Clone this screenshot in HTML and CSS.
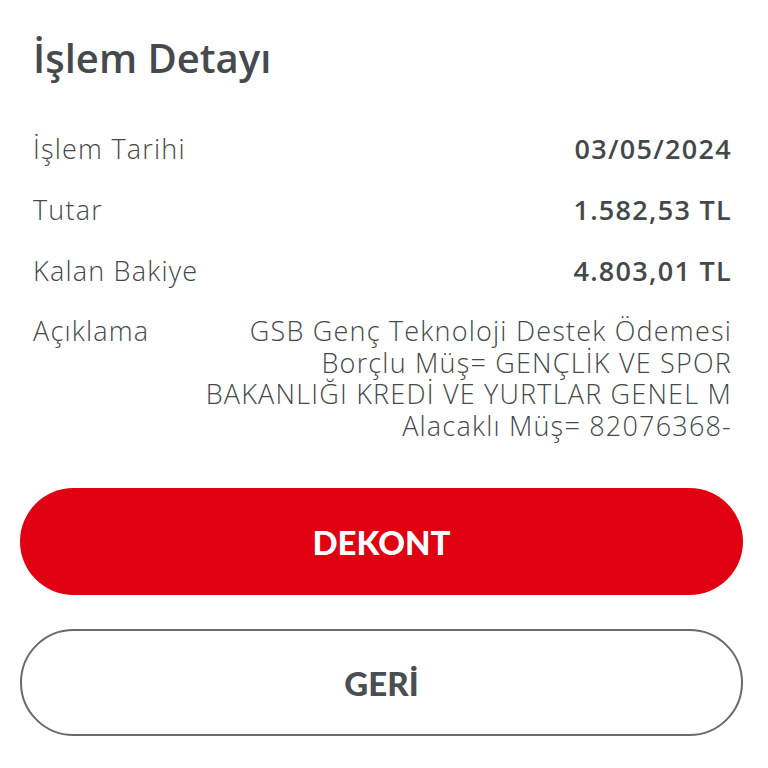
FILE: index.html
```html
<!DOCTYPE html>
<html lang="tr">
<head>
<meta charset="utf-8">
<link rel="stylesheet" href="styles.css">
</head>
<body>
<div class="page">
  <h1 class="title">İşlem Detayı</h1>
  <div class="rows">
    <div class="row"><span class="label">İşlem Tarihi</span><span class="value">03/05/2024</span></div>
    <div class="row"><span class="label">Tutar</span><span class="value">1.582,53 TL</span></div>
    <div class="row"><span class="label">Kalan Bakiye</span><span class="value">4.803,01 TL</span></div>
    <div class="row desc-row"><span class="label">Açıklama</span><span class="desc">GSB Genç Teknoloji Destek Ödemesi<br>Borçlu Müş= GENÇLİK VE SPOR<br>BAKANLIĞI KREDİ VE YURTLAR GENEL M<br>Alacaklı Müş= 82076368-</span></div>
  </div>
  <div class="buttons">
    <button class="btn btn-primary">DEKONT</button>
    <button class="btn btn-secondary">GERİ</button>
  </div>
</div>
</body>
</html>
```
FILE: styles.css
```css
html, body {
  margin: 0;
  padding: 0;
  background: #ffffff;
}
.page {
  width: 768px;
  height: 768px;
  box-sizing: border-box;
  padding: 28px 25px 0 20px;
  font-family: "Open Sans", sans-serif;
  color: #4a4d50;
}
.title {
  margin: 0 0 0 13px;
  font-family: "Open Sans", sans-serif;
  font-weight: 600;
  font-size: 40px;
  line-height: 60px;
  color: #464a4e;
}
.rows {
  margin: 30px 11px 0 13px;
  display: flex;
  flex-direction: column;
}
.row {
  display: flex;
  justify-content: space-between;
  align-items: flex-start;
  font-size: 27px;
  line-height: 61px;
}
.label {
  font-weight: 300;
  letter-spacing: 1.2px;
  color: #454849;
}
.value {
  font-weight: 600;
  letter-spacing: 1.3px;
  color: #45484b;
}
.desc-row {
  margin-top: 14px;
  line-height: 31.5px;
}
.desc {
  text-align: right;
  font-weight: 300;
  letter-spacing: 1.2px;
  color: #454849;
}
.buttons {
  margin-top: 47px;
  display: flex;
  flex-direction: column;
  gap: 34px;
}
.btn {
  width: 723px;
  height: 107px;
  border-radius: 54px;
  font-family: "Lato", sans-serif;
  font-weight: 900;
  font-size: 33px;
  cursor: pointer;
}
.btn-primary {
  background: #e00012;
  color: #ffffff;
  border: none;
}
.btn-secondary {
  background: #ffffff;
  color: #4a4f54;
  border: 2px solid #6a6a6a;
}
```
